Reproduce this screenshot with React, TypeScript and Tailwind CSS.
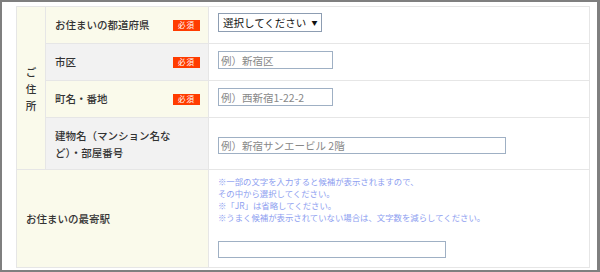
import React from "react";

const font = { fontFamily: '"Noto Sans CJK JP", "Noto Sans", sans-serif' };

function Badge() {
  return (
    <span className="flex h-[11px] w-[27px] items-center justify-center bg-[#ff3c00] text-[7.5px] font-normal leading-none tracking-[1px] text-white">
      必須
    </span>
  );
}

export default function App() {
  return (
    <div className="h-[272px] w-[600px] bg-[#7f7f7f] pb-[2px] pl-[2px] pr-[3px] pt-[2px]" style={font}>
      <div className="h-full w-full bg-white pl-[14px] pt-[4px]">
        <div className="grid w-[574px] grid-cols-[29px_163px_381px] grid-rows-[37px_37px_37px_52px_98px] border-l border-t border-[#e6e6e6] text-[10.5px] text-[#333]">
          <div className="row-span-4 flex flex-col items-center justify-center border-b border-r border-[#e6e6e6] bg-[#fafaeb] font-medium leading-[17px]">
            <span>ご</span>
            <span>住</span>
            <span>所</span>
          </div>

          <div className="flex items-center justify-between border-b border-r border-[#e6e6e6] bg-[#fafaeb] pl-[9px] pr-[8px] font-medium">
            <span>お住まいの都道府県</span>
            <Badge />
          </div>
          <div className="border-b border-r border-[#e6e6e6] bg-white pl-[9px] pt-[6px]">
            <div className="flex h-[19px] w-[104px] items-center border border-[#8d9db2] bg-white pl-[4px] text-[10.5px] text-[#111]">
              <span>選択してください</span>
              <span className="ml-[5px] text-[6px]">▼</span>
            </div>
          </div>

          <div className="flex items-center justify-between border-b border-r border-[#e6e6e6] bg-[#f2f2f2] pl-[9px] pr-[8px] font-medium">
            <span>市区</span>
            <Badge />
          </div>
          <div className="border-b border-r border-[#e6e6e6] bg-white pl-[9px] pt-[7px]">
            <input
              readOnly
              placeholder="例）新宿区"
              className="block h-[18px] w-[115px] border border-[#9fb0c4] bg-white px-[2px] text-[10.5px] outline-none placeholder:text-[#888]"
            />
          </div>

          <div className="flex items-center justify-between border-b border-r border-[#e6e6e6] bg-[#fafaeb] pl-[9px] pr-[8px] font-medium">
            <span>町名・番地</span>
            <Badge />
          </div>
          <div className="border-b border-r border-[#e6e6e6] bg-white pl-[9px] pt-[7px]">
            <input
              readOnly
              placeholder="例）西新宿1-22-2"
              className="block h-[18px] w-[115px] border border-[#9fb0c4] bg-white px-[2px] text-[10.5px] outline-none placeholder:text-[#888]"
            />
          </div>

          <div className="flex items-center border-b border-r border-[#e6e6e6] bg-[#f2f2f2] pl-[9px] pr-[8px] font-medium">
            <span className="max-w-[138px] leading-[17px]">建物名（マンション名など）・部屋番号</span>
          </div>
          <div className="border-b border-r border-[#e6e6e6] bg-white pl-[9px] pt-[19px]">
            <input
              readOnly
              placeholder="例）新宿サンエービル 2階"
              className="block h-[17px] w-[288px] border border-[#9fb0c4] bg-white px-[2px] text-[10.5px] outline-none placeholder:text-[#888]"
            />
          </div>

          <div className="col-span-2 flex items-center border-b border-r border-[#e6e6e6] bg-[#fafaeb] pl-[9px] font-medium">
            <span>お住まいの最寄駅</span>
          </div>
          <div className="border-b border-r border-[#e6e6e6] bg-white pl-[9px] pt-[5px]">
            <div className="text-[8.4px] leading-[12px] text-[#8d9ef0]">
              <p>※一部の文字を入力すると候補が表示されますので、</p>
              <p>その中から選択してください。</p>
              <p>※「JR」は省略してください。</p>
              <p>※うまく候補が表示されていない場合は、文字数を減らしてください。</p>
            </div>
            <input
              readOnly
              className="mt-[18px] block h-[17px] w-[228px] border border-[#9fb0c4] bg-white outline-none"
            />
          </div>
        </div>
      </div>
    </div>
  );
}
